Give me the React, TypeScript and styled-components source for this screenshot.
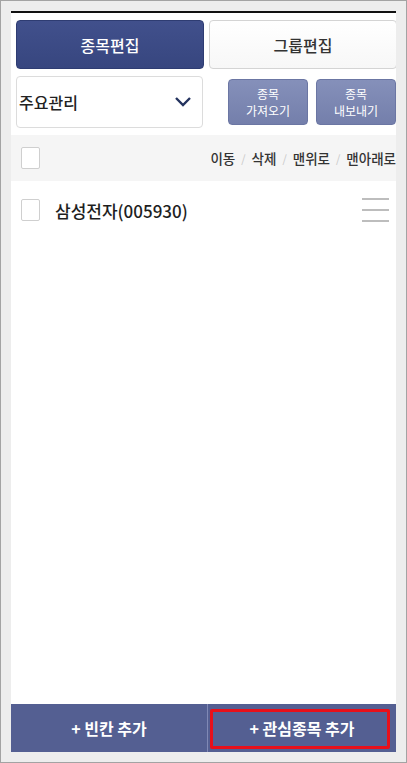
import React from 'react';
import styled, { createGlobalStyle } from 'styled-components';

const GlobalStyle = createGlobalStyle`
	html, body {
		margin: 0;
		padding: 0;
		background: #eeeeee;
	}
	* {
		box-sizing: border-box;
	}
`;

const FONT = `'Noto Sans CJK KR', 'Noto Sans', sans-serif`;

const Frame = styled.div`
	width: 407px;
	height: 763px;
	padding: 10px;
	border: 1px solid #a3a3a3;
	background: #ededed;
	font-family: ${FONT};
`;

const Screen = styled.main`
	display: flex;
	flex-direction: column;
	height: 100%;
	overflow: hidden;
	background: #ffffff;
	border-top: 2px solid #111111;
`;

const TabRow = styled.div`
	display: flex;
	gap: 5px;
	padding: 7px 0 0 5px;
`;

const Tab = styled.button<{ active?: boolean }>`
	flex: none;
	width: 188px;
	height: 49px;
	border-radius: 4px;
	border: 1px solid ${(p) => (p.active ? '#2e3c72' : '#d4d4d4')};
	background: ${(p) =>
		p.active ? 'linear-gradient(#41508c, #37467f)' : 'linear-gradient(#ffffff, #f7f7f7)'};
	color: ${(p) => (p.active ? '#ffffff' : '#333333')};
	font-family: ${FONT};
	font-size: 16px;
	font-weight: 500;
`;

const ControlRow = styled.div`
	display: flex;
	align-items: center;
	padding: 7px 0 0 5px;
`;

const Select = styled.div`
	display: flex;
	align-items: center;
	justify-content: space-between;
	width: 188px;
	height: 52px;
	padding: 0 10px 0 2px;
	border: 1px solid #dcdcdc;
	border-radius: 4px;
	background: #ffffff;
	color: #222222;
	font-size: 16px;
	font-weight: 500;
`;

const ActionGroup = styled.div`
	display: flex;
	gap: 8px;
	margin-left: 25px;
`;

const ActionButton = styled.button`
	display: flex;
	flex-direction: column;
	align-items: center;
	justify-content: center;
	flex: none;
	width: 80px;
	height: 46px;
	padding: 0;
	border: 1px solid #6b76a3;
	border-radius: 4px;
	background: linear-gradient(#8590ba, #747fab);
	color: #ffffff;
	font-family: ${FONT};
	font-size: 12px;

	span {
		display: block;
		line-height: 17.5px;
	}
`;

const HeaderRow = styled.div`
	display: flex;
	align-items: center;
	justify-content: space-between;
	height: 46px;
	margin-top: 7px;
	padding-left: 10px;
	background: #f5f5f5;
`;

const Checkbox = styled.span`
	display: block;
	width: 19px;
	height: 22px;
	border: 1px solid #cfcfcf;
	border-radius: 2px;
	background: #ffffff;
`;

const Commands = styled.div`
	display: flex;
	align-items: center;
	gap: 6px;
	color: #333333;
	font-size: 13.5px;
	font-weight: 500;
	white-space: nowrap;
`;

const Slash = styled.span`
	color: #c8c8c8;
	font-size: 11px;
	font-weight: 400;
`;

const StockRow = styled.div`
	display: flex;
	align-items: center;
	height: 58px;
	padding: 0 7px 0 10px;
`;

const StockName = styled.span`
	flex: 1;
	margin-left: 15px;
	color: #1e1e1e;
	font-size: 17px;
	font-weight: 500;
`;

const Handle = styled.span`
	display: flex;
	flex-direction: column;
	gap: 9px;
	width: 27px;

	i {
		display: block;
		height: 2px;
		background: #bdbdbd;
	}
`;

const Spacer = styled.div`
	flex: 1;
`;

const BottomBar = styled.footer`
	display: flex;
	height: 48px;
	background: #545f92;
`;

const BottomButton = styled.button<{ wide?: boolean }>`
	position: relative;
	flex: ${(p) => (p.wide ? 1 : 'none')};
	width: ${(p) => (p.wide ? 'auto' : '196px')};
	border: none;
	border-left: ${(p) => (p.wide ? '1px solid #8089b5' : 'none')};
	background: transparent;
	color: #ffffff;
	font-family: ${FONT};
	font-size: 16px;
	font-weight: 700;
	padding: 0;
`;

const Highlight = styled.span`
	position: absolute;
	top: 5px;
	left: 2px;
	right: 6px;
	bottom: 3px;
	border: 3px solid #e8101a;
	border-radius: 2px;
`;

const Chevron = () => (
	<svg width="18" height="12" viewBox="0 0 18 12">
		<path d="M2 2 L9 9 L16 2" fill="none" stroke="#24335f" strokeWidth="2.4" />
	</svg>
);

export default function App() {
	return (
		<>
			<GlobalStyle />
			<Frame>
				<Screen>
					<TabRow>
						<Tab active>종목편집</Tab>
						<Tab>그룹편집</Tab>
					</TabRow>
					<ControlRow>
						<Select>
							<span>주요관리</span>
							<Chevron />
						</Select>
						<ActionGroup>
							<ActionButton>
								<span>종목</span>
								<span>가져오기</span>
							</ActionButton>
							<ActionButton>
								<span>종목</span>
								<span>내보내기</span>
							</ActionButton>
						</ActionGroup>
					</ControlRow>
					<HeaderRow>
						<Checkbox />
						<Commands>
							<span>이동</span>
							<Slash>/</Slash>
							<span>삭제</span>
							<Slash>/</Slash>
							<span>맨위로</span>
							<Slash>/</Slash>
							<span>맨아래로</span>
						</Commands>
					</HeaderRow>
					<StockRow>
						<Checkbox />
						<StockName>삼성전자(005930)</StockName>
						<Handle>
							<i />
							<i />
							<i />
						</Handle>
					</StockRow>
					<Spacer />
					<BottomBar>
						<BottomButton>+ 빈칸 추가</BottomButton>
						<BottomButton wide>
							+ 관심종목 추가
							<Highlight />
						</BottomButton>
					</BottomBar>
				</Screen>
			</Frame>
		</>
	);
}
